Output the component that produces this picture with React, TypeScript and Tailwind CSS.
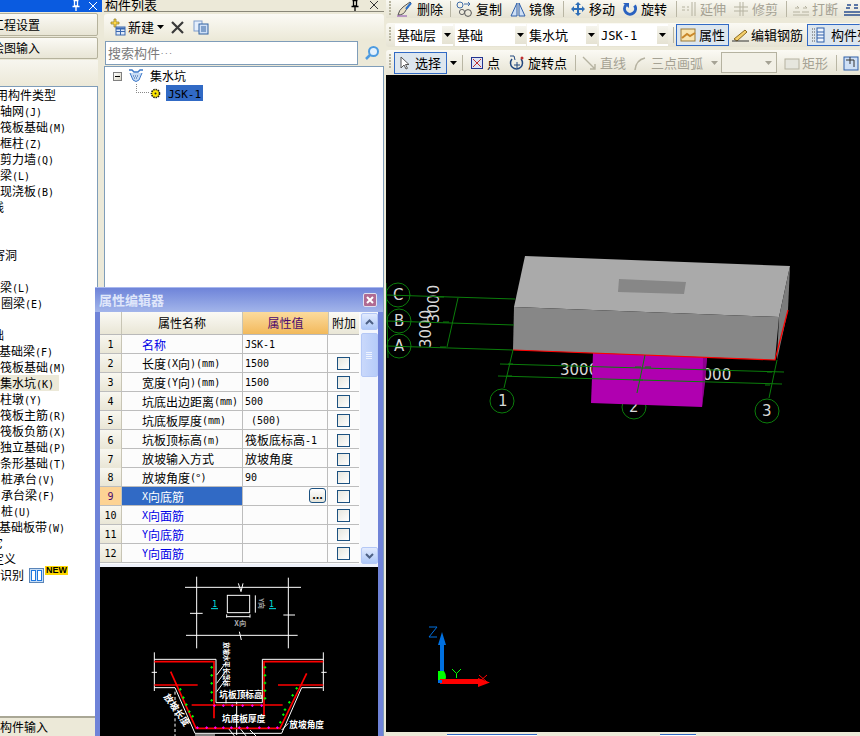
import React from "react";

const T = ({ s, lat = "text-[10px]" }: { s: string; lat?: string }) => (
  <>
    {s.split(/([\x00-\x7f]+)/).map((p, i) =>
      /^[\x00-\x7f]+$/.test(p) ? (
        <span key={i} className={`font-['DejaVu_Sans_Mono',monospace] ${lat}`}>{p}</span>
      ) : (
        <span key={i}>{p}</span>
      )
    )}
  </>
);

const Tri = ({ c = "#000" }: { c?: string }) => (
  <svg width="7" height="4" viewBox="0 0 7 4" className="shrink-0"><path d="M0 0h7L3.5 4z" fill={c} /></svg>
);
const Handle = () => (
  <div className="w-[3px] h-[17px] ml-[3px] mr-[3px] shrink-0 flex flex-col gap-[1px]">
    {[0, 1, 2, 3, 4].map((i) => <div key={i} className="w-[2px] h-[2px] bg-[#b8b5a0]" />)}
  </div>
);
const Sep = () => <div className="w-[1px] h-[16px] bg-[#b9b6a4] shrink-0" />;

const Pin = ({ c }: { c: string }) => (
  <svg width="10" height="12" viewBox="0 0 10 12"><path d="M2.5 0.5h5M3.5 1v5h3V1M1.5 6.5h7M5 7v4" stroke={c} strokeWidth="1.3" fill="none" /></svg>
);
const Cross = ({ c }: { c: string }) => (
  <svg width="10" height="10" viewBox="0 0 10 10"><path d="M1 1l8 8M9 1l-8 8" stroke={c} strokeWidth="1" /></svg>
);

const listRows: [string, string][] = [
  ["用构件类型", "-ml-[4px]"], ["轴网(J)", "ml-0"], ["筏板基础(M)", "ml-0"], ["框柱(Z)", "ml-0"],
  ["剪力墙(Q)", "ml-0"], ["梁(L)", "ml-0"], ["现浇板(B)", "ml-0"], ["线", "-ml-[8px]"], ["", "ml-0"], ["", "ml-0"],
  ["寄洞", "-ml-[7px]"], ["", "ml-0"], ["梁(L)", "ml-0"], ["圈梁(E)", "ml-[1px]"], ["", "ml-0"], ["础", "-ml-[8px]"],
  ["基础梁(F)", "-ml-[1px]"], ["筏板基础(M)", "ml-0"], ["集水坑(K)", "ml-0"], ["柱墩(Y)", "ml-0"],
  ["筏板主筋(R)", "ml-0"], ["筏板负筋(X)", "ml-0"], ["独立基础(P)", "ml-0"], ["条形基础(T)", "ml-0"],
  ["桩承台(V)", "ml-[1px]"], ["承台梁(F)", "ml-[1px]"], ["桩(U)", "ml-[1px]"], ["基础板带(W)", "-ml-[1px]"],
  ["它", "-ml-[9px]"], ["定义", "-ml-[8px]"],
];

const LeftPanel = () => (
  <div className="w-[98px] shrink-0 flex flex-col h-[736px]">
    <div className="h-[12px] bg-[#0a5be0] flex items-center justify-end gap-[7px] pr-[4px] mr-[-4px]">
      <Pin c="#fff" /><Cross c="#fff" />
    </div>
    <div className="h-[23px] mt-[1px] flex items-center border border-[#b5b29c] rounded-[2px] bg-gradient-to-b from-[#fbfaf5] to-[#e8e5d5] text-[12px] -ml-[2px] overflow-hidden"><span className="-ml-[7px]">工程设置</span></div>
    <div className="h-[22px] mt-[1px] flex items-center border border-[#b5b29c] rounded-[2px] bg-gradient-to-b from-[#fbfaf5] to-[#e8e5d5] text-[12px] -ml-[2px] overflow-hidden"><span className="-ml-[7px]">绘图输入</span></div>
    <div className="h-[26px] mt-[1px] bg-gradient-to-b from-[#f7f6ef] to-[#ece9d8]" />
    <div className="flex-1 bg-white border-t border-r border-[#7f9db9] overflow-hidden text-[12px] text-black relative">
      {listRows.map(([s, m], i) => (
        <div key={i} className={`h-[16px] leading-[16px] whitespace-nowrap ${m} ${s.startsWith("集水坑") ? "bg-[#ece9d8] w-[59px]" : ""}`}><T s={s} /></div>
      ))}
      <div className="h-[16px] flex items-center whitespace-nowrap">
        <span>识别</span>
        <span className="ml-[5px] w-[15px] h-[15px] shrink-0 border border-[#5a85b8] bg-[#c9def5] flex gap-[1px] items-center justify-center">
          <span className="w-[5px] h-[11px] border border-[#1f78e0] bg-white" />
          <span className="w-[5px] h-[11px] border border-[#1f78e0] bg-white" />
        </span>
        <span className="self-start -mt-[1px] ml-[1px] text-[9px] leading-[9px] font-bold bg-[#ffd800] px-[1px] font-['Liberation_Sans',sans-serif]">NEW</span>
      </div>
    </div>
    <div className="h-[20px] border-t-2 border-[#a9a795] bg-[#ece9d8] text-[12px] flex items-center"><span>构件输入</span></div>
  </div>
);

const NewIcon = () => (
  <svg width="18" height="18" viewBox="0 0 18 18" className="shrink-0">
    <path d="M3 4h3V1h2v3h3v2H8v3H6V6H3z" fill="#ffd84a" stroke="#8a7a20" strokeWidth=".7" />
    <rect x="8" y="9" width="9" height="8" fill="#dfe9f8" stroke="#3a68b0" />
    <path d="M8 10.5h9" stroke="#3a68b0" strokeWidth="2" /><path d="M8 13.5h9M12.5 11v6" stroke="#3a68b0" />
  </svg>
);

const MiddlePanel = () => (
  <div className="w-[280px] ml-[6px] shrink-0 flex flex-col h-[736px] bg-[#ece9d8]">
    <div className="h-[12px] overflow-hidden border-b border-[#8a887a] flex items-end justify-between pr-[5px]">
      <span className="text-[13px] leading-[14px] -mb-[1px] pl-[1px]">构件列表</span>
      <div className="flex gap-[9px] items-start self-start"><Pin c="#000" /><Cross c="#333" /></div>
    </div>
    <div className="h-[26px] mt-[2px] flex items-center rounded-[3px] bg-gradient-to-b from-[#fbfaf5] to-[#ece9d8] pl-[4px] text-[13px]">
      <NewIcon />
      <span className="ml-[2px]">新建</span>
      <span className="ml-[3px]"><Tri /></span>
      <svg width="13" height="13" viewBox="0 0 13 13" className="ml-[7px]"><path d="M1 1l11 11M12 1L1 12" stroke="#3a3a3a" strokeWidth="2.2" /></svg>
      <svg width="16" height="15" viewBox="0 0 16 15" className="ml-[9px]"><rect x="1" y="1" width="8" height="10" fill="#e4eefc" stroke="#7f9dcc" /><rect x="6" y="4" width="9" height="10" fill="#cfe0f7" stroke="#33639f" /><path d="M8 7h5M8 9h5M8 11h5" stroke="#33639f" /></svg>
    </div>
    <div className="h-[25px] flex items-center">
      <div className="w-[253px] h-[24px] ml-[1px] bg-white border border-[#7f9db9] flex items-center pl-[2px] text-[13px] text-[#7b7b7b]"><T s="搜索构件..." lat="text-[7px]" /></div>
      <svg width="16" height="16" viewBox="0 0 16 16" className="ml-[6px]"><circle cx="9.5" cy="6.5" r="4.5" fill="#e4f1fd" stroke="#4d9be0" strokeWidth="2" /><path d="M6 10l-4 4" stroke="#4d9be0" strokeWidth="2.5" /></svg>
    </div>
    <div className="flex-1 mt-[1px] bg-white border border-[#7f9db9] relative text-[12px] pl-[8px]">
      <div className="h-[18px] flex items-center">
        <span className="w-[9px] h-[9px] border border-[#808080] bg-gradient-to-br from-white to-[#d8d5c5] flex items-center justify-center"><span className="w-[5px] h-[1px] bg-black" /></span>
        <svg width="16" height="16" viewBox="0 0 16 16" className="ml-[6px]">
          <path d="M1 2h3l2 2h4l2-2h3" stroke="#3c78c8" strokeWidth="1.4" fill="none" />
          <path d="M2 5l3 7q3 3 6 0l3-7" fill="#c8dcf5" stroke="#3c78c8" /><path d="M5 8h6M6 10h4" stroke="#2a5aa0" strokeDasharray="1 1" />
        </svg>
        <span className="ml-[6px]">集水坑</span>
      </div>
      <div className="h-[16px] flex items-center">
        <span className="ml-[23px] w-[13px] h-[9px] -mt-[9px] border-l border-b border-dotted border-[#888]" />
        <svg width="11" height="11" viewBox="0 0 11 11" className="ml-[1px]"><circle cx="5.5" cy="5.5" r="4" fill="#ffe800" stroke="#222" strokeWidth="1.6" strokeDasharray="1.5 .8" /><circle cx="5.5" cy="5.5" r="1" fill="#222" /></svg>
        <span className="ml-[5px] h-[16px] w-[37px] bg-[#316ac5] pl-[2px] leading-[16px]"><T s="JSK-1" lat="text-[11px]" /></span>
      </div>
    </div>
  </div>
);

const rows: [string, string, string, boolean, boolean][] = [
  ["1", "名称", "JSK-1", true, false],
  ["2", "长度(X向)(mm)", "1500", false, true],
  ["3", "宽度(Y向)(mm)", "1500", false, true],
  ["4", "坑底出边距离(mm)", "500", false, true],
  ["5", "坑底板厚度(mm)", " (500)", false, true],
  ["6", "坑板顶标高(m)", "筏板底标高-1", false, true],
  ["7", "放坡输入方式", "放坡角度", false, true],
  ["8", "放坡角度(° )", "90", false, true],
  ["9", "X向底筋", "", true, true],
  ["10", "X向面筋", "", true, true],
  ["11", "Y向底筋", "", true, true],
  ["12", "Y向面筋", "", true, true],
];

const Check = () => <span className="w-[13px] h-[13px] border border-[#1c5180] bg-gradient-to-br from-[#e6e6de] to-white" />;

const ScrollBtn = ({ up }: { up: boolean }) => (
  <div className="h-[17px] w-[17px] rounded-[2px] border border-[#b4c8f6] bg-gradient-to-b from-[#e1eafe] to-[#aec8f7] flex items-center justify-center">
    <svg width="9" height="6" viewBox="0 0 9 6"><path d={up ? "M1 5l3.5-3.5L8 5" : "M1 1l3.5 3.5L8 1"} stroke="#4d6185" strokeWidth="2" fill="none" /></svg>
  </div>
);

const Dialog = () => (
  <div className="absolute left-[95px] top-[287px] w-[288px] h-[449px] bg-[#6f83d8] border-t border-[#a9b8ee] px-[4px] flex flex-col overflow-hidden">
    <div className="h-[24px] -mx-[4px] px-[3px] flex items-center justify-between bg-gradient-to-b from-[#6f84d9] to-[#a3b5ea] shrink-0">
      <span className="text-[13px] font-bold text-[#dfe6fa] ml-[1px]">属性编辑器</span>
      <span className="w-[14px] h-[14px] mr-[3px] rounded-[2px] bg-[#b06a92] border border-[#dfe0f0] flex items-center justify-center">
        <svg width="8" height="8" viewBox="0 0 8 8"><path d="M1 1l6 6M7 1L1 7" stroke="#fff" strokeWidth="2" /></svg>
      </span>
    </div>
    <div className="h-[252px] bg-[#fcfcfc] flex shrink-0 overflow-hidden mx-px">
      <div className="w-[259px] shrink-0 text-[12px]">
        <div className="grid grid-cols-[22px_121px_85px_31px] h-[23px] border-b border-[#b9b9b9]">
          <div className="bg-gradient-to-b from-[#fbfaf5] to-[#e9e6d6] border-r border-[#c8c5b5]" />
          <div className="bg-gradient-to-b from-[#fbfaf5] to-[#e9e6d6] border-r border-[#c8c5b5] flex items-center justify-center">属性名称</div>
          <div className="bg-gradient-to-b from-[#fbdb9d] to-[#f2b95a] text-[#4b0a6e] flex items-center justify-center">属性值</div>
          <div className="bg-gradient-to-b from-[#fbfaf5] to-[#e9e6d6] border-l border-[#c8c5b5] flex items-center justify-center">附加</div>
        </div>
        {rows.map(([n, name, val, blue, chk]) => {
          const active = n === "9";
          return (
            <div key={n} className="grid grid-cols-[22px_121px_85px_31px] h-[19px] border-b border-[#bdbdbd]">
              <div className={`pt-px flex items-center justify-center border-r border-[#c8c5b5] ${active ? "bg-[#fdd394] text-[#4b0a6e]" : "bg-gradient-to-b from-[#f8f7f0] to-[#e9e6d6]"}`}><span className="font-['DejaVu_Sans_Mono',monospace] text-[10px]">{n}</span></div>
              <div className={`pt-px flex items-center pl-[20px] whitespace-nowrap overflow-hidden border-r border-[#bdbdbd] ${active ? "bg-[#316ac5] text-white" : blue ? "text-[#0000e6]" : "text-black"}`}><T s={name} /></div>
              <div className="pt-px flex items-center pl-[2px] whitespace-pre border-r border-[#bdbdbd] relative"><T s={val} />
                {active && <span className="absolute right-[1px] top-[1px] w-[17px] h-[15px] border border-[#1c5180] rounded-[3px] bg-gradient-to-b from-white to-[#e4e4da] text-[11px] leading-[10px] text-center font-bold">...</span>}
              </div>
              <div className="pt-px flex items-center justify-center">{chk && <Check />}</div>
            </div>
          );
        })}
      </div>
      <div className="w-[19px] ml-[1px] bg-[#f4f7fd] flex flex-col items-center pt-[1px]">
        <ScrollBtn up />
        <div className="w-[17px] h-[44px] mt-[3px] rounded-[2px] border border-[#b4c8f6] bg-gradient-to-r from-[#c9d8fb] to-[#b6ccf9] flex flex-col gap-[1px] items-center justify-center">
          {[0, 1, 2, 3].map((i) => <div key={i} className="w-[6px] h-[1px] bg-[#eef3fe]" />)}
        </div>
        <div className="flex-1" />
        <ScrollBtn up={false} />
      </div>
    </div>
    <div className="h-[3px] bg-[#eef1fa] shrink-0 mx-px" />
    <div className="flex-1 bg-black mx-px overflow-hidden">
      <Drawing />
    </div>
  </div>
);

const plus = (pts: number[][], c: string) =>
  pts.map(([x, y], i) => <path key={c + i} d={`M${x - 4} ${y}h8M${x} ${y - 4}v8`} stroke={c} strokeWidth="3" />);

const Drawing = () => (
  <svg width="285" height="171" viewBox="0 6 855 513" className="block">
    <g stroke="#fff" strokeWidth="3" fill="none">
      <path d="M290 35v215M565 38v212M255 67h348M258 211h335" />
      <rect x="382" y="91" width="67" height="52" />
      <path d="M415 55l8 25 6-25M418 200l6 25M270 145h38M550 150h35M380 155h70M466 91v52M380 148v10M450 148v10" />
      <path d="M163 283h185v130h139V283h183M163 262v116M670 262v116M163 368h62l60 137h260l60-137h63M155 322h16M664 322h16" />
      <path d="M225 380v133" strokeDasharray="9 7" />
      <path d="M350 330l30-40M350 355l30-40M350 380l30-40M378 400v15M410 410v100M385 490l20 25M420 490l20 25M450 495l20 20M285 510h60M545 495l20-20" />
    </g>
    <g stroke="#ff0000" strokeWidth="5" fill="none">
      <path d="M163 290h179v170M670 290H492v160M163 360h130M534 360h136M275 420h273" />
      <path d="M212 320l76 170h252l80-165" />
    </g>
    {plus([[335, 307], [335, 331], [335, 355], [335, 382], [335, 406], [495, 307], [495, 331], [495, 354], [495, 377], [495, 400], [241, 373], [250, 398], [259, 419], [268, 440], [278, 454], [590, 370], [578, 391], [568, 412], [555, 434], [550, 449], [541, 472]], "#00ff00")}
    {plus([[343, 422], [370, 422], [397, 422], [428, 422], [457, 422], [485, 422], [292, 488], [320, 488], [346, 488], [370, 488], [394, 488], [418, 488], [442, 488], [478, 488], [506, 488], [532, 488]], "#ff00ff")}
    <g fontFamily="Noto Sans CJK SC, sans-serif" fill="#fff" fontWeight="700">
      <text x="358" y="400" fontSize="26">坑板顶标高</text>
      <text x="366" y="472" fontSize="26">坑底板厚度</text>
      <text x="568" y="488" fontSize="26">放坡角度</text>
      <text transform="translate(371 232) rotate(90)" fontSize="19" x="0" y="0">放坡水平长度标</text>
      <text transform="translate(190 395) rotate(55)" fontSize="28">放坡长度</text>
      <text x="403" y="184" fontSize="22" fill="#aaa">X向</text>
      <text transform="translate(477 100) rotate(90)" fontSize="20" fill="#aaa">Y向</text>
    </g>
    <g fill="#00e5e5" fontFamily="DejaVu Sans Mono, monospace" fontSize="24">
      <text x="337" y="125">1</text><text x="507" y="125">1</text>
    </g>
    <path d="M333 131h21M507 131h21" stroke="#00e5e5" strokeWidth="3" />
  </svg>
);

const Combo = ({ s, w, ml }: { s: string; w: string; ml: string }) => (
  <div className={`${w} ${ml} h-[22px] bg-white flex items-center justify-between text-[13px] shrink-0`}>
    <span className="pl-[2px]"><T s={s} lat="text-[12px]" /></span>
    <span className="w-[11px] h-[18px] bg-gradient-to-b from-[#f5f4ec] to-[#e5e2d2] flex items-center justify-center"><Tri /></span>
  </div>
);

const Ic = ({ children, w = 16 }: { children: React.ReactNode; w?: number }) => (
  <svg width={w} height="16" viewBox={`0 0 ${w} 16`} className="shrink-0">{children}</svg>
);

const ToolRow1 = () => (
  <div className="h-[18px] flex items-center text-[13px] bg-gradient-to-b from-[#f9f8f1] to-[#e6e3d3] overflow-hidden whitespace-nowrap">
    <Handle />
    <span className="ml-[2px]"><Ic><path d="M1 14q6 0 8-5l5-7-1-1-7 5Q2 9 1 14z" fill="#e8e0c8" stroke="#555" /><path d="M9 8l5-6" stroke="#2b6fc9" strokeWidth="2" /><path d="M0 15h10" stroke="#8a4ab0" /></Ic></span>
    <span className="ml-[4px]">删除</span>
    <span className="ml-[7px]"><Sep /></span>
    <span className="ml-[5px]"><Ic w={17}><circle cx="4" cy="4" r="3" fill="none" stroke="#406ca8" /><circle cx="12" cy="12" r="3.4" fill="none" stroke="#555" /><circle cx="6" cy="11" r="2.6" fill="none" stroke="#666" /><path d="M8 3h6l-2-2M14 3l-2 2" stroke="#406ca8" fill="none" /></Ic></span>
    <span className="ml-[3px]">复制</span>
    <span className="ml-[8px]"><Ic><path d="M7 2L1 15h6zM9 2l6 13H9z" fill="#cfe0f5" stroke="#2f5fa8" /></Ic></span>
    <span className="ml-[3px]">镜像</span>
    <span className="ml-[8px]"><Sep /></span>
    <span className="ml-[6px]"><Ic><path d="M8 1l3 3H9v3h3V5l3 3-3 3V9H9v3h2l-3 3-3-3h2V9H4v2L1 8l3-3v2h3V4H5z" fill="#2f6fb8" /></Ic></span>
    <span className="ml-[3px]">移动</span>
    <span className="ml-[8px]"><Ic w={14}><path d="M11.5 4.5A5.5 5.5 0 1 1 3 4" fill="none" stroke="#2a62c0" strokeWidth="3" /><path d="M0 2h6v5z" fill="#2a62c0" /></Ic></span>
    <span className="ml-[4px]">旋转</span>
    <span className="ml-[9px]"><Sep /></span>
    <span className="ml-[5px]"><Ic w={14}><path d="M0 6h3M0 9h3M5 6h2M5 9h2M10 1v14M13 1v14" stroke="#b5b2a0" /></Ic></span>
    <span className="ml-[4px] text-[#a5a294]">延伸</span>
    <span className="ml-[8px]"><Ic w={14}><path d="M0 6h14M0 10h14M6 1v14M9 1v14" stroke="#b5b2a0" /></Ic></span>
    <span className="ml-[4px] text-[#a5a294]">修剪</span>
    <span className="ml-[8px]"><Sep /></span>
    <span className="ml-[6px]"><Ic><path d="M0 11h7M9 11h7M2 7h4l-2-2M10 7h4l-2-2M0 14h16" stroke="#b5b2a0" fill="none" /></Ic></span>
    <span className="ml-[3px] text-[#a5a294]">打断</span>
    <span className="ml-[6px]"><Ic><path d="M0 11h16M0 14h16M2 7h4M10 7h4M3 4h4M10 4h4" stroke="#2a4f90" strokeWidth="1.4" /></Ic></span>
  </div>
);

const ToolRow2 = () => (
  <div className="h-[24px] mt-[5px] flex items-center text-[13px] rounded-[3px] bg-gradient-to-b from-[#fbfaf4] to-[#e6e3d3] overflow-hidden whitespace-nowrap">
    <Handle />
    <Combo s="基础层" w="w-[58px]" ml="ml-0" />
    <Combo s="基础" w="w-[71px]" ml="ml-[2px]" />
    <Combo s="集水坑" w="w-[70px]" ml="ml-px" />
    <Combo s="JSK-1" w="w-[69px]" ml="ml-[2px]" />
    <span className="ml-[5px]"><Sep /></span>
    <div className="ml-[2px] w-[53px] h-[22px] border border-[#316ac5] bg-[#dde6ee] flex items-center shrink-0">
      <span className="ml-[3px]"><Ic><rect x="1" y="2" width="14" height="12" fill="#f8e4b0" stroke="#9a7a3a" /><path d="M2 11l5-4 3 2 5-3" stroke="#c9872a" strokeWidth="2" fill="none" /></Ic></span>
      <span className="ml-[3px]">属性</span>
    </div>
    <span className="ml-[3px]"><Ic w={17}><path d="M2 12L13 3l2 2-10 9z" fill="#f5cf6a" stroke="#8a6a20" /><path d="M0 14h17" stroke="#333" /></Ic></span>
    <span className="ml-[2px]">编辑钢筋</span>
    <div className="ml-[4px] w-[60px] h-[22px] border border-[#316ac5] bg-[#dde6ee] flex items-center shrink-0">
      <span className="ml-[3px]"><Ic w={14}><path d="M1 2h3M1 5h3M1 8h3M1 11h3M1 14h3" stroke="#555" strokeDasharray="1 1" /><rect x="6" y="1" width="7" height="14" fill="#f0f5fc" stroke="#2f5fa8" /><path d="M6 5h7M6 8h7M6 11h7" stroke="#2f5fa8" /></Ic></span>
      <span className="ml-[6px]">构件列表</span>
    </div>
  </div>
);

const ToolRow3 = () => (
  <div className="h-[25px] mt-[3px] flex items-center text-[13px] rounded-[3px] bg-gradient-to-b from-[#fbfaf4] to-[#e6e3d3] overflow-hidden whitespace-nowrap">
    <Handle />
    <div className="-ml-[1px] w-[53px] h-[22px] border border-[#316ac5] bg-[#dde6ee] flex items-center shrink-0">
      <span className="ml-[3px]"><Ic w={12}><path d="M3 2v11l3-3 2 4 1.5-.7L7.5 9.500H11z" fill="#fff" stroke="#555" /></Ic></span>
      <span className="ml-[5px]">选择</span>
    </div>
    <span className="ml-[3px]"><Tri /></span>
    <span className="ml-[5px]"><Sep /></span>
    <span className="ml-[8px]"><Ic w={12}><rect x=".5" y="2.500" width="11" height="11" fill="#dfe5f5" stroke="#23348f" /><path d="M2 4l8 8M10 4l-8 8" stroke="#c03030" /></Ic></span>
    <span className="ml-[4px]">点</span>
    <span className="ml-[9px]"><Ic><path d="M3 4a6 6 0 1 0 9 0" fill="none" stroke="#23487f" strokeWidth="1.5" /><path d="M1 1h4l1 4M8 7v6M5 10h6" stroke="#23487f" fill="none" /><circle cx="13" cy="3" r="1.500" fill="#c03030" /></Ic></span>
    <span className="ml-[3px]">旋转点</span>
    <span className="ml-[8px]"><Sep /></span>
    <span className="ml-[6px]"><Ic w={14}><path d="M1 2l12 12M13 9v5H8" stroke="#b5b2a0" strokeWidth="1.4" fill="none" /></Ic></span>
    <span className="ml-[4px] text-[#a5a294]">直线</span>
    <span className="ml-[7px]"><Ic w={14}><path d="M2 15Q3 5 12 3" stroke="#b5b2a0" strokeWidth="1.6" fill="none" /></Ic></span>
    <span className="ml-[4px] text-[#a5a294]">三点画弧</span>
    <span className="ml-[8px]"><Tri c="#a5a294" /></span>
    <div className="ml-[3px] w-[56px] h-[21px] border border-[#b5b2a0] bg-[#f2f0e6] flex items-center justify-end pr-[4px] shrink-0"><Tri c="#a5a294" /></div>
    <span className="ml-[7px]"><Ic><rect x="1" y="4" width="14" height="10" fill="#e6e6de" stroke="#b5b2a0" /></Ic></span>
    <span className="ml-[2px] text-[#a5a294]">矩形</span>
    <span className="ml-[8px]"><Sep /></span>
    <span className="ml-[6px]"><Ic><rect x="1" y="2" width="14" height="13" fill="#cfe0f5" stroke="#2f5fa8" /><path d="M3 5h8v7M7 2v7" stroke="#333" fill="none" /></Ic></span>
  </div>
);

const Canvas = () => {
  const g = "#0b7d0b";
  return (
    <div className="flex-1 bg-black overflow-hidden min-h-0">
      <svg width="474" height="657" viewBox="386 75 474 657" className="block">
        <g fill="none" stroke={g} strokeWidth="1">
          <circle cx="398" cy="295" r="12" /><circle cx="399" cy="321" r="12" /><circle cx="399" cy="346" r="12" />
          <circle cx="502" cy="401" r="12" /><circle cx="634" cy="407" r="12" /><circle cx="767" cy="411" r="12" />
        </g>
        <g fontFamily="DejaVu Sans, sans-serif" fontSize="15" fill="#d8d8d8">
          <text x="393" y="300">C</text><text x="394" y="326">B</text><text x="394" y="351">A</text>
          <text x="498" y="406">1</text><text x="629" y="412">2</text><text x="762" y="416">3</text>
          <text x="560" y="375">3000</text><text x="693" y="380">3000</text>
          <text transform="translate(431 348) rotate(-90)">3000</text>
          <text transform="translate(439 323) rotate(-90)">3000</text>
        </g>
        <polygon points="593,353 707,357 702,407 591,403" fill="#b000b0" />
        <polygon points="703,357 707,357 705,383 702,407" fill="#8c008c" />
        <polygon points="525,256 790,266 779,317 514,307" fill="#aaaaaa" />
        <polygon points="514,307 779,317 775,360 513,350" fill="#878787" />
        <polygon points="790,266 788,310 777,360 779,317" fill="#7c7c7c" />
        <polygon points="619,279 686,282 684,294 618,292" fill="#878787" />
        <path d="M513 350L775 360L788 310" stroke="#ff0000" fill="none" strokeWidth="1.200" />
        <g stroke={g} fill="none">
          <path d="M387 295L515 299M387 321L514 325M387 346L513 350" />
          <path d="M458 298L447 347M513 350L504 388M777 360L769 398M645 355L637 393" />
          <path d="M500 364L784 372M498 376L782 384" />
          <path d="M386 283L388 358M439 297h5M443 322h6M440 347h6M508 364h5M507 376h5M635 367h6M645 367h6M633 380h10M767 372h5M765 385h5" />
        </g>
        <path d="M440 682V645h-2l4-13 4 13h-2v37z" fill="#0070e0" />
        <path d="M429 627h8l-8 10h8" fill="none" stroke="#0070e0" />
        <path d="M438 671h6q2 3 2 6t-2 5h-6z" fill="#00ff00" />
        <path d="M440 679h38v-1l12 4.500-12 4.500v-3h-38z" fill="#ff0000" />
        <path d="M452 669l4.500 4.500L461 669M456.500 673.500V678" fill="none" stroke="#00ff00" />
        <path d="M479 675l8 7M487 675l-8 7" stroke="#ff0000" fill="none" />
        <path d="M440 680v3" stroke="#0070e0" strokeWidth="4" />
      </svg>
    </div>
  );
};

const RightPanel = () => (
  <div className="w-[474px] ml-[2px] shrink-0 flex flex-col h-[736px] bg-[#ece9d8]">
    <ToolRow1 />
    <ToolRow2 />
    <ToolRow3 />
    <Canvas />
    <div className="h-[4px] shrink-0 flex items-end">
      <div className="ml-[61px] w-[90px] h-[2px] border-t border-[#316ac5] bg-white" />
      <div className="ml-[123px] w-[36px] h-[2px] border-t border-[#316ac5] bg-white" />
    </div>
  </div>
);

export default function App() {
  return (
    <div className="relative w-[860px] h-[736px] overflow-hidden flex bg-[#ece9d8] text-black font-['Noto_Sans_CJK_SC','Liberation_Sans',sans-serif]">
      <LeftPanel />
      <MiddlePanel />
      <RightPanel />
      <Dialog />
    </div>
  );
}
